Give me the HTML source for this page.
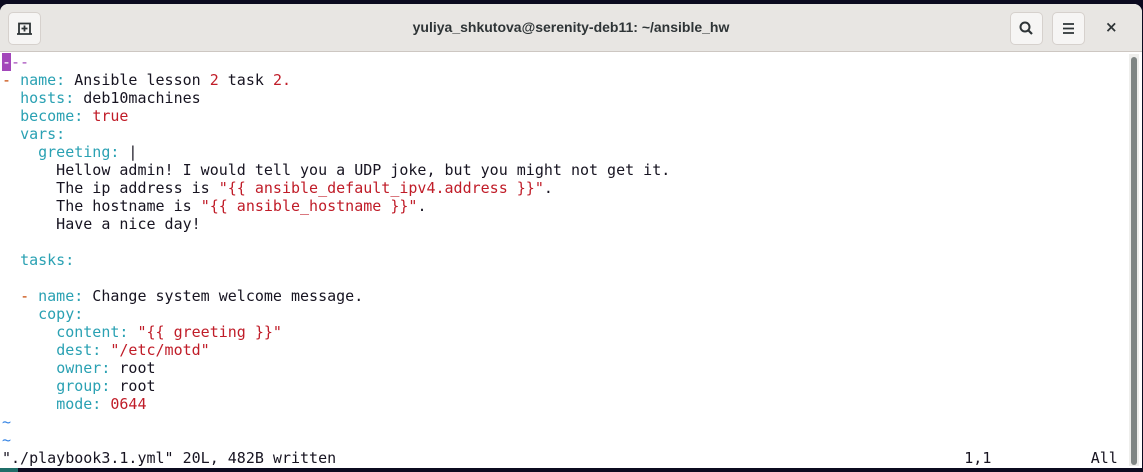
<!DOCTYPE html>
<html><head><style>
html,body{margin:0;padding:0;width:1143px;height:472px;background:#0b0a1f;overflow:hidden}
.win{position:absolute;left:0;top:4px;width:1142px;height:464px;background:#fff;border-radius:8px 8px 0 0;overflow:hidden}
.hb{position:absolute;left:0;top:0;width:1142px;height:47px;background:#e8e6e3;border-bottom:1px solid #cdc7c2}
.btn{position:absolute;top:8px;width:33px;height:33px;border-radius:5px;background:#f6f5f4;border:1px solid #d6d1cd;box-sizing:border-box}
.title{position:absolute;left:0;width:1142px;top:15px;text-align:center;font:bold 14px "Liberation Sans",sans-serif;color:#2e3436}
pre{position:absolute;left:2px;top:49px;margin:0;font:15px/18px "DejaVu Sans Mono","Liberation Mono",monospace;color:#171421}
.k{color:#2aa1b3}.r{color:#c01c28}.p{color:#a347ba}.o{color:#c64600}.b{color:#3584e4}
.cur{background:#a347ba;color:#fff}
.sb{position:absolute;left:1129px;top:50px;width:10px;height:412px;background:#eeeeec}
.th{position:absolute;left:1131px;top:53px;width:6px;height:408px;background:#7f8584;border-radius:3px}
</style></head><body>
<div style="position:absolute;left:0;top:467px;width:18px;height:5px;background:#1f6d68"></div>
<div class="win">
<div class="hb">
<div class="btn" style="left:8px"><svg width="31" height="31" viewBox="0 0 31 31"><path d="M10 20.5V10.5h11v10M8 21h15" stroke="#2e3436" stroke-width="1.8" fill="none"/><path d="M15.5 12.5v6M12.5 15.5h6" stroke="#2e3436" stroke-width="1.8"/></svg></div>
<div class="title">yuliya_shkutova@serenity-deb11: ~/ansible_hw</div>
<div class="btn" style="left:1010px"><svg width="31" height="31" viewBox="0 0 31 31"><circle cx="14" cy="14" r="4.5" stroke="#2e3436" stroke-width="2" fill="none"/><path d="M17.5 17.5l3.5 3.5" stroke="#2e3436" stroke-width="2.2"/></svg></div>
<div class="btn" style="left:1052px"><svg width="31" height="31" viewBox="0 0 31 31"><path d="M10 11h11M10 15.5h11M10 20h11" stroke="#2e3436" stroke-width="1.8"/></svg></div>
<div style="position:absolute;left:1105px;top:14px;font:bold 15px 'DejaVu Sans',sans-serif;color:#2e3436">×</div>
</div>
<div class="sb"></div><div class="th"></div>
<pre><span class="cur">-</span><span class="p">--</span>
<span class="o">-</span> <span class="k">name:</span> Ansible lesson <span class="r">2</span> task <span class="r">2.</span>
  <span class="k">hosts:</span> deb10machines
  <span class="k">become:</span> <span class="r">true</span>
  <span class="k">vars:</span>
    <span class="k">greeting:</span> |
      Hellow admin! I would tell you a UDP joke, but you might not get it.
      The ip address is <span class="r">"{{ ansible_default_ipv4.address }}"</span>.
      The hostname is <span class="r">"{{ ansible_hostname }}"</span>.
      Have a nice day!

  <span class="k">tasks:</span>

  <span class="o">-</span> <span class="k">name:</span> Change system welcome message.
    <span class="k">copy:</span>
      <span class="k">content:</span> <span class="r">"{{ greeting }}"</span>
      <span class="k">dest:</span> <span class="r">"/etc/motd"</span>
      <span class="k">owner:</span> root
      <span class="k">group:</span> root
      <span class="k">mode:</span> <span class="r">0644</span>
<span class="b">~</span>
<span class="b">~</span>
"./playbook3.1.yml" 20L, 482B written                                                                     <span style="display:inline-block;width:5px"></span>1,1           All</pre>
</div>
</body></html>
